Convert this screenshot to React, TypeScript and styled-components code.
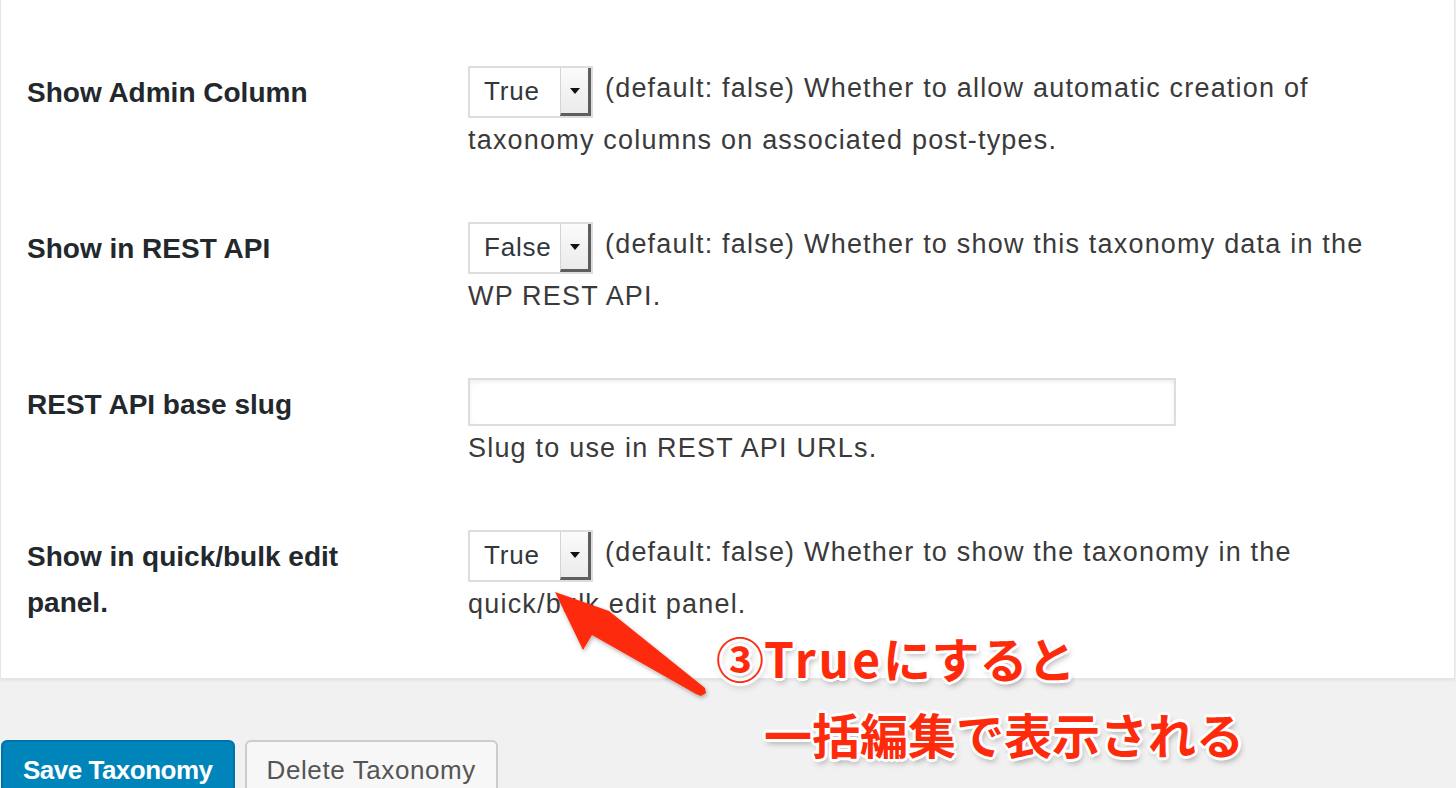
import styled, { createGlobalStyle } from "styled-components";

const GlobalStyle = createGlobalStyle`
  html, body {
    margin: 0;
    padding: 0;
    background: #f1f1f1;
    font-family: "Liberation Sans", Arial, sans-serif;
  }
`;

const Page = styled.div`
  position: relative;
  width: 1456px;
  height: 788px;
  overflow: hidden;
`;

const Panel = styled.div`
  width: 1455px;
  box-sizing: border-box;
  background: #fff;
  border: 1px solid #e5e5e5;
  border-top: none;
  box-shadow: 0 2px 2px rgba(0, 0, 0, 0.05);
  padding: 36px 0 22px;
`;

const FormRow = styled.div`
  display: grid;
  grid-template-columns: 441px 1fr;
  padding: 30px 58px 30px 26px;
`;

const Label = styled.div`
  max-width: 380px;
  padding-top: 4px;
  font-size: 28px;
  line-height: 46px;
  font-weight: bold;
  color: #23282d;
`;

const Field = styled.div`
  font-size: 27px;
  line-height: 44px;
  letter-spacing: 1.2px;
  color: #3a3a3a;
`;

const Select = styled.div`
  display: inline-flex;
  vertical-align: top;
  box-sizing: border-box;
  width: 125px;
  height: 52px;
  margin-right: 12px;
  border: 2px solid #ddd;
  background: #fff;
`;

const SelectValue = styled.span`
  flex: 1;
  padding-left: 14px;
  font-size: 26px;
  line-height: 47px;
  letter-spacing: 0.8px;
  color: #32373c;
`;

const SelectArrow = styled.span`
  width: 31px;
  box-sizing: border-box;
  display: flex;
  align-items: center;
  justify-content: center;
  border-left: 1px solid #d4d4d4;
  border-right: 3px solid #5e5e5e;
  border-bottom: 3px solid #5e5e5e;
  background: linear-gradient(#fbfbfb, #ebebeb);

  &::after {
    content: "";
    border-left: 5px solid transparent;
    border-right: 5px solid transparent;
    border-top: 6px solid #111;
  }
`;

const TextInput = styled.input`
  display: block;
  box-sizing: border-box;
  width: 708px;
  height: 48px;
  margin: 0;
  border: 2px solid #ddd;
  box-shadow: inset 0 2px 4px rgba(0, 0, 0, 0.07);
  background: #fff;
`;

const Actions = styled.div`
  display: flex;
  gap: 10px;
  margin-top: 61px;
  padding-left: 1px;
`;

const Button = styled.button<{ $primary?: boolean }>`
  height: 60px;
  padding: 0 20px;
  border-radius: 6px;
  font-family: "Liberation Sans", Arial, sans-serif;
  font-size: 26px;
  line-height: 56px;
  border: 2px solid ${(p) => (p.$primary ? "#0073aa" : "#ccc")};
  background: ${(p) => (p.$primary ? "#0085ba" : "#f7f7f7")};
  color: ${(p) => (p.$primary ? "#fff" : "#555")};
  font-weight: ${(p) => (p.$primary ? "bold" : "normal")};
  letter-spacing: ${(p) => (p.$primary ? "-0.5px" : "0.6px")};
  box-shadow: 0 2px 0 ${(p) => (p.$primary ? "#006799" : "#ccc")};
`;

const Note = styled.div<{ $left: number; $top: number }>`
  position: absolute;
  left: ${(p) => p.$left}px;
  top: ${(p) => p.$top}px;
  font-family: "Noto Sans CJK JP", "Liberation Sans", sans-serif;
  font-weight: bold;
  font-size: 48px;
  line-height: 60px;
  white-space: nowrap;
  color: #fd2a0c;
  text-shadow: 3px 0 0 #fff, -3px 0 0 #fff, 0 3px 0 #fff, 0 -3px 0 #fff,
    2px 2px 0 #fff, -2px -2px 0 #fff, 2px -2px 0 #fff, -2px 2px 0 #fff,
    2px 4px 6px rgba(0, 0, 0, 0.35);
`;

const Latin = styled.span`
  letter-spacing: 3px;
`;

const ArrowSvg = styled.svg`
  position: absolute;
  left: 540px;
  top: 580px;
  width: 180px;
  height: 125px;
  overflow: visible;
`;

type Choice = { label: string; value: string; text: string };

const choices: Record<string, Choice> = {
  admin: {
    label: "Show Admin Column",
    value: "True",
    text: "(default: false) Whether to allow automatic creation of taxonomy columns on associated post-types.",
  },
  rest: {
    label: "Show in REST API",
    value: "False",
    text: "(default: false) Whether to show this taxonomy data in the WP REST API.",
  },
  quick: {
    label: "Show in quick/bulk edit panel.",
    value: "True",
    text: "(default: false) Whether to show the taxonomy in the quick/bulk edit panel.",
  },
};

const SelectRow = ({ item }: { item: Choice }) => (
  <FormRow>
    <Label>{item.label}</Label>
    <Field>
      <Select>
        <SelectValue>{item.value}</SelectValue>
        <SelectArrow />
      </Select>
      {item.text}
    </Field>
  </FormRow>
);

export default function App() {
  return (
    <Page>
      <GlobalStyle />
      <Panel>
        <SelectRow item={choices.admin} />
        <SelectRow item={choices.rest} />
        <FormRow>
          <Label>REST API base slug</Label>
          <Field>
            <TextInput type="text" />
            Slug to use in REST API URLs.
          </Field>
        </FormRow>
        <SelectRow item={choices.quick} />
      </Panel>
      <Actions>
        <Button $primary>Save Taxonomy</Button>
        <Button>Delete Taxonomy</Button>
      </Actions>

      <ArrowSvg viewBox="540 580 180 125">
        <defs>
          <filter id="sh" x="-20%" y="-20%" width="140%" height="140%">
            <feDropShadow dx="1" dy="2" stdDeviation="2" floodOpacity="0.3" />
          </filter>
        </defs>
        <polygon
          points="555,592 609,611 705,688 706,693 701,696 696,694 592,635 583,650"
          fill="#fd2a0c"
          filter="url(#sh)"
        />
      </ArrowSvg>
      <Note $left={716} $top={627}>
        ③<Latin>True</Latin>にすると
      </Note>
      <Note $left={764} $top={703}>一括編集で表示される</Note>
    </Page>
  );
}
